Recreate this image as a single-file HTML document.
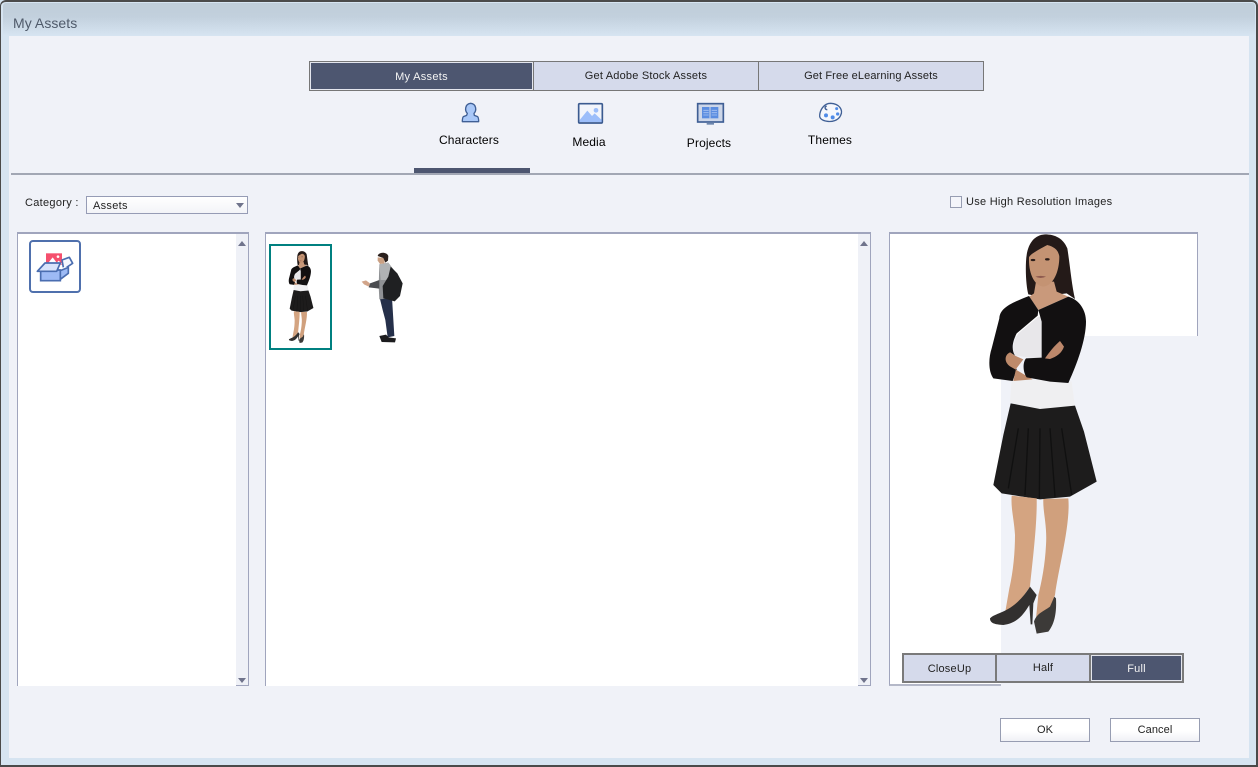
<!DOCTYPE html>
<html>
<head>
<meta charset="utf-8">
<style>
html,body{margin:0;padding:0;width:1258px;height:767px;overflow:hidden;background:#d6e4f1}
*{box-sizing:border-box}
body{font-family:"Liberation Sans",sans-serif;font-size:11px;color:#222;position:relative}
.a{position:absolute}
.btn{position:absolute;border:1px solid #777;background:#d5daeb;color:#222;text-align:center;white-space:nowrap;letter-spacing:.2px}
.vb{border:2px solid #7a7a7a}
.on{background:#4d5670;color:#f4f4f4;box-shadow:inset 0 0 0 1px #e4e6ee}
.lab{position:absolute;font-size:12px;color:#000;white-space:nowrap;transform:translateX(-50%);letter-spacing:.13px}
.panel{position:absolute;background:#fff;border:1px solid #a0a5bd;border-bottom:0}
.sb{position:absolute;top:0;bottom:0;right:0;width:12px;background:#eff1f7}
.up,.dn{position:absolute;left:2px;width:0;height:0;border-left:4px solid transparent;border-right:4px solid transparent}
.up{top:7px;border-bottom:5px solid #70748c}
.dn{bottom:3px;border-top:5px solid #70748c}
.ok{position:absolute;border:1px solid #979db2;background:linear-gradient(#fff 55%,#f0f1f6);text-align:center;line-height:23px;letter-spacing:.1px;color:#222}
</style>
</head>
<body>
<div class="a" style="left:0;top:0;width:1258px;height:767px;border:1px solid #4a4a4a;border-width:2px 2px 2px 1px;border-radius:6px 6px 0 0;background:#d6e4f1"></div>
<div class="a" style="left:3px;top:3px;width:1252px;height:33px;background:linear-gradient(#bfcdd9 0,#c2d0dd 40%,#d6e4f1 100%);border-radius:3px 3px 0 0"></div>
<div class="a" style="left:13px;top:15px;font-size:14px;color:#4f5a6a;letter-spacing:.05px;white-space:nowrap">My Assets</div>
<div class="a" style="left:9px;top:36px;width:1240px;height:722px;background:#f0f2f8"></div>

<!-- top tabs -->
<div class="btn on" style="left:309px;top:61px;width:225px;height:30px;line-height:31px;letter-spacing:.3px">My Assets</div>
<div class="btn" style="left:533px;top:61px;width:226px;height:30px;line-height:28px;">Get Adobe Stock Assets</div>
<div class="btn" style="left:758px;top:61px;width:226px;height:30px;line-height:28px;letter-spacing:.12px">Get Free eLearning Assets</div>

<!-- category icons -->
<svg class="a" style="left:450px;top:98px" width="170" height="32" viewBox="0 0 510 96">
  <path d="M52,46 C44,38 44,18 62,16 C80,18 80,38 72,46 L73,52 L83,56 C85,58 86,62 86,71 H37 C37,62 38,58 40,56 L50,52Z" fill="#a9c8f8" stroke="#3f5f95" stroke-width="4" stroke-linejoin="round"/>
  <rect x="386" y="17" width="71" height="58" rx="3" fill="#f2f5fb" stroke="#3b5b90" stroke-width="5"/>
  <path d="M389,72 V66 L412,38 L426,54 L434,46 L455,66 V72Z" fill="#9cbefa"/>
  <circle cx="438" cy="37" r="7" fill="#9cbefa"/>
</svg>
<svg class="a" style="left:690px;top:98px" width="170" height="32" viewBox="0 0 510 96">
  <rect x="23" y="17" width="77" height="55" fill="#ccd6e8" stroke="#3f5f95" stroke-width="5"/>
  <rect x="36" y="27" width="49" height="34" fill="#5b8de0"/>
  <path d="M60,27 V61" stroke="#ccd6e8" stroke-width="3"/>
  <path d="M40,37 H56 M40,44 H56 M40,51 H56 M65,37 H81 M65,44 H81 M65,51 H81" stroke="#a9c4f2" stroke-width="2.5"/>
  <rect x="50" y="73" width="22" height="7" fill="#6d86ad"/>
  <path d="M422,16 C400,16 390,38 389,52 C388,62 398,68 412,70 C425,72 445,68 452,52 C460,36 448,17 422,16Z M412,35 C405,35 402,27 410,24" fill="#f5f7fc" stroke="#3f5f95" stroke-width="4"/>
  <circle cx="408" cy="52" r="6" fill="#4f8be8"/><circle cx="428" cy="58" r="6" fill="#4f8be8"/><circle cx="443" cy="48" r="5" fill="#4f8be8"/><circle cx="440" cy="32" r="4.5" fill="#4f8be8"/>
</svg>
<div class="lab" style="left:469px;top:133px">Characters</div>
<div class="lab" style="left:589px;top:135px">Media</div>
<div class="lab" style="left:709px;top:136px">Projects</div>
<div class="lab" style="left:830px;top:133px">Themes</div>

<div class="a" style="left:11px;top:173px;width:1238px;height:2px;background:#a2a7b4"></div>
<div class="a" style="left:414px;top:168px;width:116px;height:5px;background:#4d5670"></div>

<!-- category row -->
<div class="a" style="left:25px;top:197px;letter-spacing:.3px;white-space:nowrap">Category :</div>
<div class="a" style="left:86px;top:196px;width:162px;height:18px;border:1px solid #969cb5;background:linear-gradient(#fff,#f3f4f8);line-height:18px;padding-left:6px;letter-spacing:.3px">Assets
  <div class="a" style="right:3px;top:6px;width:0;height:0;border-left:4px solid transparent;border-right:4px solid transparent;border-top:5px solid #70748c"></div>
</div>
<div class="a" style="left:950px;top:196px;width:12px;height:12px;border:1.5px solid #979db2;background:#f4f5fa"></div>
<div class="a" style="left:966px;top:196px;letter-spacing:.27px;white-space:nowrap">Use High Resolution Images</div>

<!-- left panel -->
<div class="panel" style="left:17px;top:232px;width:232px;height:454px;border-width:2px 1px 0 1px">
  <div class="sb" style="top:0"><div class="up"></div><div class="dn"></div></div>
</div>
<div class="a" style="left:236px;top:685px;width:13px;height:1px;background:#a0a5bd"></div>
<div class="a" style="left:29px;top:240px;width:52px;height:53px;border:2px solid #4f70ad;border-radius:4px;background:#fff"></div>
<svg class="a" style="left:0;top:180px" width="280" height="130" viewBox="0 0 840 390">
  <path d="M138,220 H186 V254 H138Z" fill="#f5506e"/>
  <path d="M142,252 L158,232 L170,248 L176,242 L186,252Z" fill="#fff"/>
  <circle cx="174" cy="230" r="4" fill="#fff"/>
  <path d="M122,270 V302 H181 V270Z" fill="#9dbaf5" stroke="#4a6db0" stroke-width="5"/>
  <path d="M135,249 L112,274 H170 L181,249Z" fill="#d8e4fb" stroke="#4a6db0" stroke-width="5" stroke-linejoin="round"/>
  <path d="M181,298 L205,280 V262 L181,272Z" fill="#9dbaf5" stroke="#4a6db0" stroke-width="5" stroke-linejoin="round"/>
  <path d="M190,262 L186,240 L208,232 L218,250 L200,262" fill="#f4f7fe" stroke="#4a6db0" stroke-width="5" stroke-linejoin="round"/>
</svg>

<!-- center panel -->
<div class="panel" style="left:265px;top:232px;width:606px;height:454px;border-width:2px 1px 0 1px">
  <div class="sb"><div class="up"></div><div class="dn"></div></div>
</div>
<div class="a" style="left:858px;top:685px;width:13px;height:1px;background:#a0a5bd"></div>

<!-- right panel -->
<div class="a" style="left:889px;top:232px;width:309px;height:104px;background:#fff;border:1px solid #a0a5bd;border-bottom:0;border-top-width:2px"></div>
<div class="a" style="left:889px;top:336px;width:112px;height:350px;background:#fff;border-left:1px solid #a0a5bd;border-bottom:2px solid #b4b8c8"></div>

<svg width="0" height="0" style="position:absolute">
  <symbol id="woman" viewBox="0 0 480 1245" overflow="visible">
    <path d="M255,28 C220,30 200,60 198,110 C196,150 200,190 205,208 L240,215 L320,205 L345,222 C335,180 330,120 322,70 C310,40 285,28 255,28Z" fill="#241a18"/>
    <path d="M228,170 L222,205 L208,215 L235,255 L325,215 L290,200 L282,170Z" fill="#c9997b"/>
    <path d="M207,95 C205,150 225,182 250,185 C280,182 298,140 298,95 C295,70 275,60 260,60 C235,75 215,85 207,95Z" fill="#c49373"/>
    <path d="M205,100 C215,80 240,72 262,60 C280,65 292,72 298,90 L296,60 L265,42 L225,50 L205,80Z" fill="#241a18"/>
    <ellipse cx="219" cy="105" rx="7" ry="3.5" fill="#2a1c18"/><ellipse cx="262" cy="103" rx="7" ry="3.5" fill="#2a1c18"/>
    <path d="M226,155 Q242,150 258,155 Q242,163 226,155Z" fill="#8e5a4e"/>
    <path d="M235,275 L175,325 C160,350 155,370 165,392 L245,402 L245,275Z" fill="#e8e7ea"/>
    <path d="M155,465 L150,530 L165,540 L240,552 L345,545 L335,470 L250,465Z" fill="#efeff1"/>
    <path d="M207,213 L235,255 L233,272 L170,325 C155,355 155,375 165,392 L150,382 L170,434 L158,468 L100,460 C85,440 85,400 95,370 L118,280 C120,250 150,235 207,213Z" fill="#121011"/>
    <path d="M150,382 C135,388 130,410 150,424 L190,447 L218,463 L160,468 L168,432 L190,403 L165,392Z" fill="#bd8a6b"/>
    <path d="M325,215 C358,225 378,255 378,290 C378,345 350,420 325,474 L270,470 L200,457 C188,440 188,412 198,400 L245,398 L245,290 L235,255Z" fill="#121011"/>
    <path d="M255,400 C265,385 285,360 300,348 L312,365 C305,385 290,395 270,402Z" fill="#bd886b"/>
    <path d="M152,535 L130,630 L100,780 L125,805 L240,823 L330,815 L410,770 L372,620 L345,542 L240,552Z" fill="#1d1c1c"/>
    <path d="M175,610 L145,790 M240,610 L238,820 M305,610 L335,810 M205,610 L195,810 M270,610 L285,815" stroke="#101010" stroke-width="4" fill="none"/>
    <path d="M155,812 C152,850 162,880 165,930 C165,980 160,1040 148,1090 L135,1165 L165,1150 L210,1085 C215,1030 232,900 230,820Z" fill="#d4a481"/>
    <path d="M250,822 C248,860 262,900 258,960 C255,1020 245,1070 235,1110 L228,1180 L270,1150 L285,1110 C295,1030 332,900 325,820Z" fill="#d0a07d"/>
    <path d="M90,1180 C110,1160 160,1165 210,1085 L230,1110 L220,1135 L217,1198 L212,1198 L208,1140 C190,1170 170,1195 130,1200 C105,1198 90,1195 90,1180Z" fill="#32302f"/>
    <path d="M222,1190 C230,1165 250,1160 270,1145 L283,1115 L288,1120 C290,1160 285,1195 265,1220 L230,1226Z" fill="#3c3a38"/>
  </symbol>
</svg>

<!-- big preview -->
<svg class="a" style="left:960px;top:225px" width="160" height="415"><use href="#woman" width="160" height="415"/></svg>

<!-- thumbnails -->
<div class="a" style="left:269px;top:244px;width:63px;height:106px;border:2px solid #008080"></div>
<svg class="a" style="left:281.5px;top:248.9px;filter:blur(.3px)" width="37" height="95.5"><use href="#woman" width="36.8" height="95.4"/></svg>
<svg class="a" style="left:260px;top:230px;filter:blur(.3px)" width="170" height="130" viewBox="0 0 510 390">
  <path d="M360,207 L396,203 L403,318 L383,322 L376,270 L368,240Z" fill="#25304a"/>
  <path d="M358,103 L385,98 L400,118 L396,205 L358,208 L356,168Z" fill="#8f9194"/>
  <path d="M358,103 L385,98 L398,118 L395,150 L362,150Z" fill="#b0b2b4"/>
  <path d="M358,150 L330,160 L326,172 L358,176Z" fill="#4a4c50"/>
  <path d="M305,155 L318,151 L330,160 L326,170 L312,163Z" fill="#d2a58a"/>
  <path d="M392,110 L412,130 L428,160 L420,198 L404,214 L370,205 L368,168 L385,140Z" fill="#1f2022"/>
  <path d="M353,82 L372,84 L374,100 L360,102 L353,92Z" fill="#caa083"/>
  <path d="M353,78 C355,66 380,64 385,78 L384,92 L376,98 L370,84Z" fill="#2a1f1c"/>
  <path d="M358,318 L378,314 L386,322 L408,325 L405,337 L365,336Z" fill="#1c1c1e"/>
</svg>

<!-- view buttons -->
<div class="btn vb" style="left:902px;top:653px;width:95px;height:30px;line-height:28px">CloseUp</div>
<div class="btn vb" style="left:995px;top:653px;width:96px;height:30px;line-height:26px">Half</div>
<div class="btn vb on" style="left:1089px;top:653px;width:95px;height:30px;line-height:29px">Full</div>

<div class="ok" style="left:1000px;top:718px;width:90px;height:24px">OK</div>
<div class="ok" style="left:1110px;top:718px;width:90px;height:24px">Cancel</div>
</body>
</html>
